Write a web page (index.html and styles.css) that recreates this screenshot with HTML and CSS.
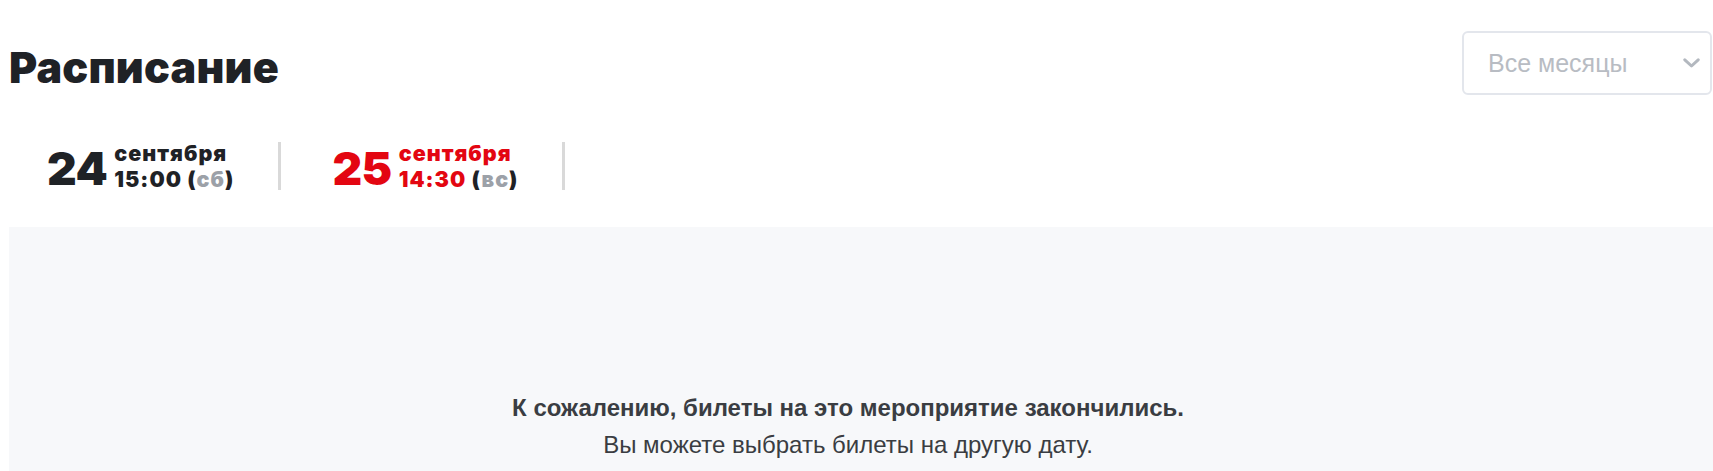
FILE: index.html
```html
<!DOCTYPE html>
<html lang="ru">
<head>
<meta charset="utf-8">
<title>Расписание</title>
<link rel="stylesheet" href="styles.css">
</head>
<body>
<div class="schedule">
  <div class="head">
    <h1 class="title">Расписание</h1>
    <div class="select">
      <span class="select-text">Все месяцы</span>
      <svg class="chev" width="17" height="10" viewBox="0 0 17 10"><path d="M1.8 1.8 L8.5 8 L15.2 1.8" fill="none" stroke="#b3b8bf" stroke-width="3" stroke-linecap="round" stroke-linejoin="round"/></svg>
    </div>
  </div>
  <div class="dates">
    <div class="date first">
      <span class="day">24</span>
      <span class="info">
        <span class="month">сентября</span>
        <span class="time">15:00 <span class="wd">(<span class="wdn">сб</span>)</span></span>
      </span>
    </div>
    <div class="date active">
      <span class="day">25</span>
      <span class="info">
        <span class="month">сентября</span>
        <span class="time">14:30 <span class="wd">(<span class="wdn">вс</span>)</span></span>
      </span>
    </div>
  </div>
  <div class="panel">
    <p class="msg-strong">К сожалению, билеты на это мероприятие закончились.</p>
    <p class="msg">Вы можете выбрать билеты на другую дату.</p>
  </div>
</div>
</body>
</html>
```

FILE: styles.css
```css
html, body {
  margin: 0;
  padding: 0;
  background: #ffffff;
}
body {
  padding: 0 0 0 8px;
  font-family: Inter, "Noto Sans", sans-serif;
  color: #1f2226;
  overflow: hidden;
}
.head {
  display: flex;
  justify-content: space-between;
  align-items: flex-start;
  padding-top: 31px;
}
.title {
  margin: 11px 0 0 1px;
  font-size: 43px;
  font-weight: 900;
  line-height: 50px;
  letter-spacing: 0.2px;
}
.select {
  box-sizing: border-box;
  width: 250px;
  height: 64px;
  margin-right: 1px;
  border: 2px solid #e3e6ec;
  border-radius: 6px;
  display: flex;
  align-items: center;
  justify-content: space-between;
  padding: 0 10px 0 24px;
}
.select-text {
  font-family: "Liberation Sans", Arial, sans-serif;
  font-size: 25px;
  color: #b8bcc3;
}
.chev {
  display: block;
}
.dates {
  display: flex;
  margin-top: 47px;
  height: 48px;
}
.date {
  display: flex;
  align-items: center;
  padding: 0 44px 0 51px;
  border-right: 3px solid #d9d9d9;
}
.date.first {
  padding-left: 39px;
  padding-right: 44px;
}
.day {
  font-size: 46px;
  font-weight: 900;
  line-height: 1;
  letter-spacing: -0.5px;
  margin-right: 7px;
  margin-top: 4px;
}
.info {
  display: flex;
  flex-direction: column;
  font-size: 21.5px;
  font-weight: 900;
  line-height: 26px;
  letter-spacing: 1px;
}
.wd {
  color: #1f2226;
}
.wdn {
  color: #9ca1a8;
}
.active .day,
.active .month,
.active .time {
  color: #e30611;
}
.active .wd {
  color: #1f2226;
}
.active .wdn {
  color: #9ca1a8;
}
.panel {
  margin-top: 37px;
  margin-left: 1px;
  background: #f7f8fa;
  height: 260px;
  box-sizing: border-box;
  padding: 166px 26px 0 0;
  text-align: center;
  font-family: "Liberation Sans", Arial, sans-serif;
  color: #3a3d42;
}
.msg-strong {
  margin: 0;
  font-size: 24px;
  font-weight: 700;
  line-height: 30px;
}
.msg {
  margin: 7px 0 0;
  font-size: 24px;
  line-height: 30px;
}
```
